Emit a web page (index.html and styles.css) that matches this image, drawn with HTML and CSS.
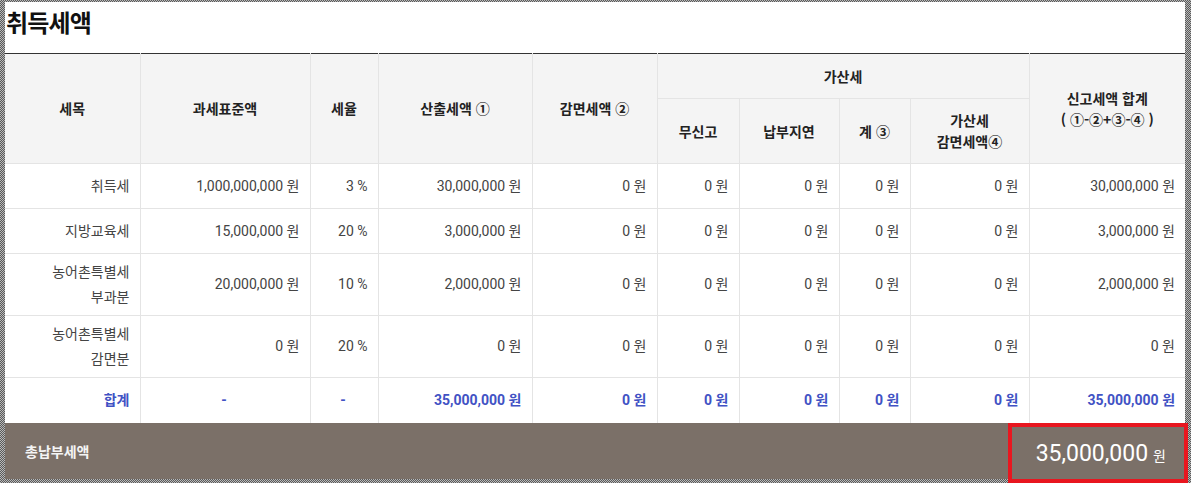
FILE: index.html
```html
<!DOCTYPE html>
<html lang="ko">
<head>
<meta charset="utf-8">
<title>취득세액</title>
<link rel="stylesheet" href="styles.css">
</head>
<body>
<div class="frame">
  <div class="panel">
    <h2 class="title">취득세액</h2>
    <table class="tax">
      <colgroup>
        <col class="c1"><col class="c2"><col class="c3"><col class="c4"><col class="c5">
        <col class="c6"><col class="c7"><col class="c8"><col class="c9"><col class="c10">
      </colgroup>
      <thead>
        <tr class="hr1">
          <th rowspan="2">세목</th>
          <th rowspan="2">과세표준액</th>
          <th rowspan="2">세율</th>
          <th rowspan="2">산출세액 ①</th>
          <th rowspan="2">감면세액 ②</th>
          <th colspan="4">가산세</th>
          <th rowspan="2" class="last">신고세액 합계<br>( ①-②+③-④ )</th>
        </tr>
        <tr class="hr2">
          <th>무신고</th>
          <th>납부지연</th>
          <th>계 ③</th>
          <th>가산세<br>감면세액④</th>
        </tr>
      </thead>
      <tbody>
        <tr class="r1">
          <td>취득세</td><td>1,000,000,000 원</td><td>3 %</td><td>30,000,000 원</td><td>0 원</td>
          <td>0 원</td><td>0 원</td><td>0 원</td><td>0 원</td><td class="last">30,000,000 원</td>
        </tr>
        <tr class="r1">
          <td>지방교육세</td><td>15,000,000 원</td><td>20 %</td><td>3,000,000 원</td><td>0 원</td>
          <td>0 원</td><td>0 원</td><td>0 원</td><td>0 원</td><td class="last">3,000,000 원</td>
        </tr>
        <tr class="r2">
          <td>농어촌특별세<br>부과분</td><td>20,000,000 원</td><td>10 %</td><td>2,000,000 원</td><td>0 원</td>
          <td>0 원</td><td>0 원</td><td>0 원</td><td>0 원</td><td class="last">2,000,000 원</td>
        </tr>
        <tr class="r2">
          <td>농어촌특별세<br>감면분</td><td>0 원</td><td>20 %</td><td>0 원</td><td>0 원</td>
          <td>0 원</td><td>0 원</td><td>0 원</td><td>0 원</td><td class="last">0 원</td>
        </tr>
        <tr class="r1 sum">
          <td>합계</td><td class="ctr">-</td><td class="ctr">-</td><td>35,000,000 원</td><td>0 원</td>
          <td>0 원</td><td>0 원</td><td>0 원</td><td>0 원</td><td class="last">35,000,000 원</td>
        </tr>
      </tbody>
    </table>
    <div class="total">
      <span class="total-label">총납부세액</span>
      <div class="total-value"><span class="amount">35,000,000</span><span class="unit">원</span></div>
    </div>
  </div>
</div>
</body>
</html>
```

FILE: styles.css
```css
* { box-sizing: border-box; }
html, body { margin: 0; padding: 0; background: #ffffff; }
body {
  font-family: Roboto, "Noto Sans CJK KR", sans-serif;
  font-size: 14px;
  color: #444;
}
.frame {
  width: 1191px;
  padding: 2px 6px 4px 5px;
  background:
    repeating-conic-gradient(#5a5a5a 0 25%, #b8b8b8 0 50%) 0 0 / 2px 2px,
    #888;
}
.panel {
  width: 1180px;
  background: #fff;
  display: flex;
  flex-direction: column;
}
.title {
  margin: 0;
  height: 51px;
  padding: 0 0 0 1px;
  line-height: 40px;
  font-family: "Noto Sans CJK KR", sans-serif;
  font-size: 24px;
  font-weight: 700;
  color: #111;
  letter-spacing: -0.8px;
}
.tax {
  width: 1180px;
  border-collapse: collapse;
  table-layout: fixed;
  border-top: 1px solid #333;
}
.c1 { width: 135px; }
.c2 { width: 170px; }
.c3 { width: 68px; }
.c4 { width: 154px; }
.c5 { width: 125px; }
.c6 { width: 82px; }
.c7 { width: 100px; }
.c8 { width: 71px; }
.c9 { width: 119px; }
.c10 { width: 156px; }
.tax th, .tax td {
  border: 1px solid #e4e4e4;
  padding: 0 10px 0 8px;
}
.tax tr > :first-child { border-left: none; }
.tax .last { border-right: none; }
.tax th {
  background: #f4f4f4;
  font-family: "Noto Sans CJK KR", sans-serif;
  font-weight: 700;
  color: #222;
  text-align: center;
  line-height: 21px;
  padding: 0 4px;
}
.tax thead tr:first-child th { border-top: 1px solid #333; }
.hr1 { height: 45px; }
.hr2 { height: 65px; }
.tax td {
  text-align: right;
  line-height: 25px;
}
.r1 { height: 45px; }
.r2 { height: 62px; }
.tax tbody tr:last-child td { border-bottom: none; }
.sum td {
  color: #4152c4;
  font-weight: 700;
}
.sum td.ctr { text-align: center; }
.total {
  height: 56px;
  background: #7b7068;
  display: flex;
  align-items: stretch;
  justify-content: space-between;
}
.total-label {
  align-self: center;
  padding-left: 20px;
  color: #f4f4f4;
  font-family: "Noto Sans CJK KR", sans-serif;
  font-weight: 700;
  font-size: 14px;
}
.total-value {
  width: 180px;
  margin: 0 -3px -4px 0;
  border: 4px solid #e8161f;
  display: flex;
  align-items: center;
  justify-content: flex-end;
  padding: 2px 18px 0 0;
  color: #fff;
  gap: 5px;
}
.amount {
  font-family: Roboto, sans-serif;
  font-size: 23px;
}
.unit {
  font-family: "Noto Sans CJK KR", sans-serif;
  font-size: 14px;
  padding-top: 3px;
}
```
